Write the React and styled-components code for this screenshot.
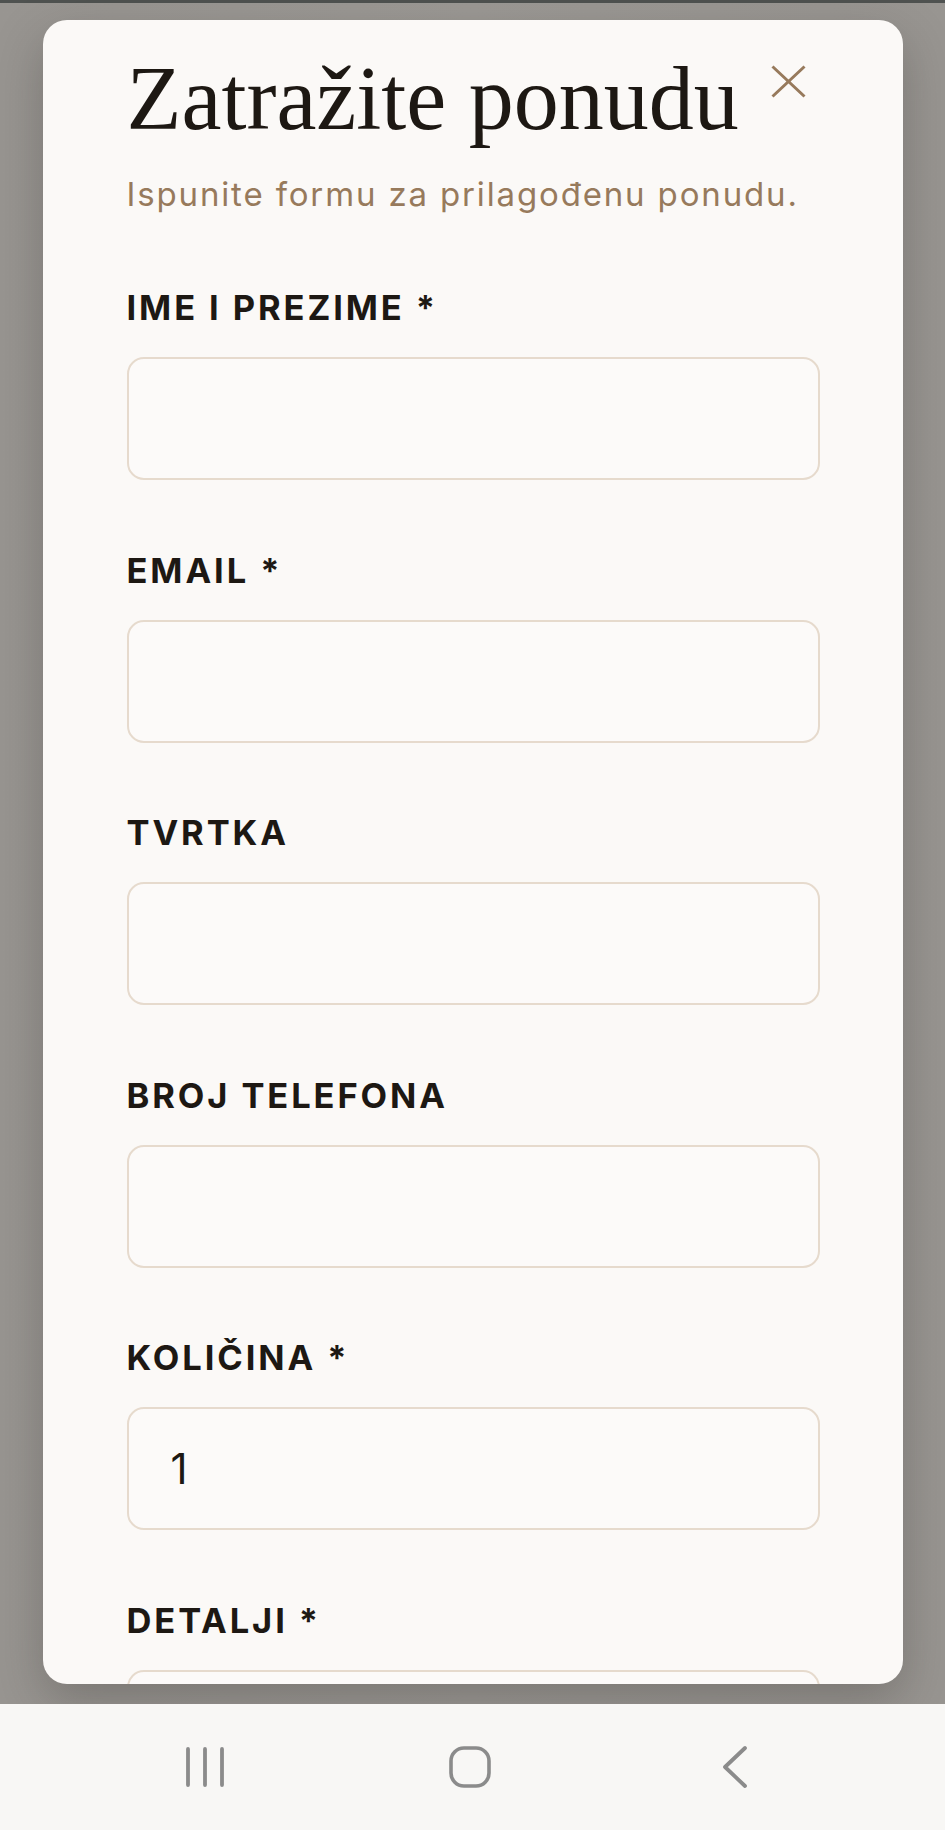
import React from "react";
import styled, { createGlobalStyle } from "styled-components";

const GlobalStyle = createGlobalStyle`
  html, body {
    margin: 0;
    padding: 0;
    background: #9b9894;
  }
  * {
    box-sizing: border-box;
  }
`;

const fields = [
  { label: "IME I PREZIME", required: true },
  { label: "EMAIL", required: true },
  { label: "TVRTKA" },
  { label: "BROJ TELEFONA" },
  { label: "KOLIČINA", required: true, value: "1" },
  { label: "DETALJI", required: true, multiline: true },
];

function App() {
  return (
    <Screen>
      <GlobalStyle />
      <StatusStrip />
      <Backdrop>
        <Card>
          <Header>
            <Title>Zatražite ponudu</Title>
            <CloseButton aria-label="close">
              <svg width="35" height="33" viewBox="0 0 35 33">
                <path d="M1.5 1.5 L33.5 31.5 M33.5 1.5 L1.5 31.5" stroke="#977a5c" strokeWidth="3" fill="none" />
              </svg>
            </CloseButton>
          </Header>
          <Subtitle>Ispunite formu za prilagođenu ponudu.</Subtitle>
          <Form>
            {fields.map((f) => (
              <Field key={f.label}>
                <Label>
                  {f.label}
                  {f.required && " *"}
                </Label>
                {f.multiline ? (
                  <TextArea />
                ) : (
                  <Input defaultValue={f.value || ""} />
                )}
              </Field>
            ))}
          </Form>
        </Card>
      </Backdrop>
      <NavBar>
        <NavSlot>
          <svg width="40" height="42" viewBox="0 0 40 42">
            <path d="M3 3 V39 M20 3 V39 M37 3 V39" stroke="#8b8b8b" strokeWidth="3.8" strokeLinecap="round" fill="none" />
          </svg>
        </NavSlot>
        <NavSlot>
          <svg width="42" height="42" viewBox="0 0 42 42">
            <rect x="2" y="2" width="38" height="38" rx="13" stroke="#8b8b8b" strokeWidth="3.6" fill="none" />
          </svg>
        </NavSlot>
        <NavSlot>
          <svg width="26" height="44" viewBox="0 0 26 44">
            <path d="M23 3 L3 22 L23 41" stroke="#8b8b8b" strokeWidth="3.8" strokeLinecap="round" strokeLinejoin="round" fill="none" />
          </svg>
        </NavSlot>
      </NavBar>
    </Screen>
  );
}

const Screen = styled.div`
  width: 945px;
  height: 1830px;
  display: flex;
  flex-direction: column;
  background: #9b9894;
  overflow: hidden;
`;

const StatusStrip = styled.div`
  height: 3px;
  background: #4f5250;
  flex-shrink: 0;
`;

const Backdrop = styled.div`
  flex: 1;
  display: flex;
  justify-content: center;
  padding: 17px 0 20px;
  background: linear-gradient(90deg, #989591 0%, #9c9995 50%, #989591 100%);
`;

const Card = styled.div`
  width: 860px;
  height: 1664px;
  background: #fbf9f7;
  border-radius: 24px;
  padding: 29px 83px 0 84px;
  overflow: hidden;
  box-shadow: 0 18px 50px rgba(40, 36, 32, 0.28);
`;

const Header = styled.div`
  display: flex;
  justify-content: space-between;
  align-items: flex-start;
`;

const Title = styled.h2`
  margin: 0;
  font-family: "Liberation Serif", "DejaVu Serif", serif;
  font-weight: 400;
  font-size: 90px;
  line-height: 100px;
  color: #1d1813;
`;

const CloseButton = styled.button`
  border: none;
  background: none;
  padding: 0;
  margin: 16px 14px 0 0;
  display: flex;
  cursor: pointer;
`;

const Subtitle = styled.p`
  margin: 25px 0 0;
  font-family: Inter, "Liberation Sans", sans-serif;
  font-size: 33px;
  line-height: 40px;
  letter-spacing: 1.85px;
  color: #977a5c;
`;

const Form = styled.div`
  display: flex;
  flex-direction: column;
  gap: 70.5px;
  margin-top: 74px;
`;

const Field = styled.div`
  display: flex;
  flex-direction: column;
  gap: 29px;
`;

const Label = styled.label`
  font-family: Inter, "Liberation Sans", sans-serif;
  font-weight: 700;
  font-size: 34.5px;
  line-height: 40px;
  letter-spacing: 2.9px;
  color: #1d1813;
`;

const Input = styled.input`
  width: 100%;
  height: 123px;
  border: 2.5px solid #e6dacd;
  border-radius: 17px;
  background: #fcfaf9;
  padding: 0 42px;
  font-family: Inter, "Liberation Sans", sans-serif;
  font-size: 42px;
  color: #1d1813;
  outline: none;
`;

const TextArea = styled.textarea`
  width: 100%;
  height: 260px;
  border: 2.5px solid #e6dacd;
  border-radius: 17px;
  background: #fcfaf9;
  padding: 30px 42px;
  resize: none;
  font-family: Inter, "Liberation Sans", sans-serif;
  font-size: 42px;
  outline: none;
`;

const NavBar = styled.div`
  height: 126px;
  flex-shrink: 0;
  background: #f8f7f5;
  display: flex;
  justify-content: center;
  align-items: center;
  gap: 205px;
  padding-right: 5px;
`;

const NavSlot = styled.div`
  width: 60px;
  display: flex;
  justify-content: center;
  align-items: center;
`;

export default App;
